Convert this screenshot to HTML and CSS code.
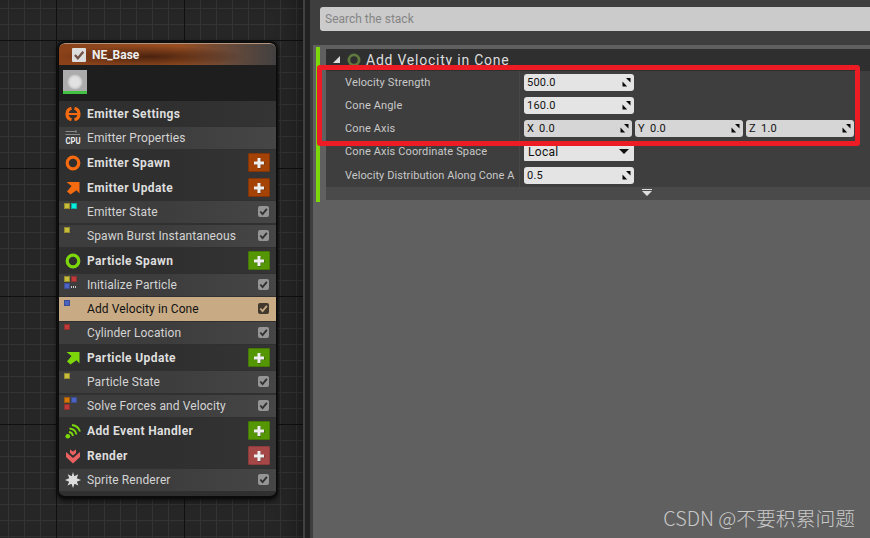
FILE: index.html
```
<!DOCTYPE html>
<html lang="en">
<head>
    <meta charset="UTF-8">
    <meta name="viewport" content="width=device-width, initial-scale=1.0">
    <title>NE_Base</title>
    <link rel="stylesheet" href="styles.css">
</head>
<body>
    <!-- shared icons -->
    <svg class="defs">
        <defs>
            <symbol id="check" viewBox="0 0 12 12"><path d="M2.5 6 L5 8.8 L9.7 3.2" fill="none" stroke="currentColor" stroke-width="2"/></symbol>
            <symbol id="plus" viewBox="0 0 12 12"><path d="M5 2h3v9.500H5zM2 5h9.500v3H2z" fill="#222" opacity=".6"/><path d="M4.500 1h3v3.500H11v3H7.500V11h-3V7.500H1v-3h3.500z" fill="#eee"/></symbol>
            <symbol id="ring" viewBox="0 0 16 16"><circle cx="8" cy="8" r="5.800" fill="none" stroke="currentColor" stroke-width="3.200"/></symbol>
            <symbol id="arrow" viewBox="0 0 16 16"><path d="M1.500 2H14.500V13.500L11.500 10.300L5.500 14.500L2 11.500L6.500 6z" fill="currentColor"/></symbol>
            <symbol id="spin" viewBox="0 0 9 9"><path d="M4 0H8.500V4.500zM0.500 3.500V8.500H5.200z" fill="#080808"/></symbol>
        </defs>
    </svg>

    <div class="editor">
        <div class="graph">
            <div class="node">
                <div class="node-title">
                    <span class="title-check"><svg><use href="#check"/></svg></span>
                    NE_Base
                </div>
                <div class="preview"><div class="thumb"></div></div>

                <div class="group orange">
                    <svg class="icon" viewBox="0 0 16 16"><path d="M6.500 2.200A6 6 0 0 0 6.500 13.800M9.500 2.200A6 6 0 0 1 9.500 13.800" fill="none" stroke="currentColor" stroke-width="3.200"/><path d="M3 8H13" stroke="currentColor" stroke-width="2.200"/></svg>
                    <span>Emitter Settings</span>
                </div>
                <div class="item">
                    <svg class="icon cpu" viewBox="0 0 16 16"><path d="M0.500 1.500H11M0.500 4.500H15M11 0V3" stroke="#888" stroke-width="1"/><text x="0.500" y="14" textLength="15" lengthAdjust="spacingAndGlyphs">CPU</text></svg>
                    <span>Emitter Properties</span>
                </div>

                <div class="group orange">
                    <svg class="icon"><use href="#ring"/></svg>
                    <span>Emitter Spawn</span>
                    <button class="add"><svg><use href="#plus"/></svg></button>
                </div>
                <div class="group orange">
                    <svg class="icon"><use href="#arrow"/></svg>
                    <span>Emitter Update</span>
                    <button class="add"><svg><use href="#plus"/></svg></button>
                </div>
                <div class="item">
                    <div class="dots"><i class="y"></i><i class="c"></i></div>
                    <span>Emitter State</span>
                    <b class="box"><svg><use href="#check"/></svg></b>
                </div>
                <div class="item">
                    <div class="dots"><i class="y"></i></div>
                    <span>Spawn Burst Instantaneous</span>
                    <b class="box"><svg><use href="#check"/></svg></b>
                </div>

                <div class="group green">
                    <svg class="icon"><use href="#ring"/></svg>
                    <span>Particle Spawn</span>
                    <button class="add"><svg><use href="#plus"/></svg></button>
                </div>
                <div class="item">
                    <div class="dots"><i class="y"></i><i class="r"></i><i class="b"></i><em></em></div>
                    <span>Initialize Particle</span>
                    <b class="box"><svg><use href="#check"/></svg></b>
                </div>
                <div class="item selected">
                    <div class="dots"><i class="b"></i></div>
                    <span>Add Velocity in Cone</span>
                    <b class="box"><svg><use href="#check"/></svg></b>
                </div>
                <div class="item">
                    <div class="dots"><i class="r"></i></div>
                    <span>Cylinder Location</span>
                    <b class="box"><svg><use href="#check"/></svg></b>
                </div>

                <div class="group green">
                    <svg class="icon"><use href="#arrow"/></svg>
                    <span>Particle Update</span>
                    <button class="add"><svg><use href="#plus"/></svg></button>
                </div>
                <div class="item">
                    <div class="dots"><i class="y"></i></div>
                    <span>Particle State</span>
                    <b class="box"><svg><use href="#check"/></svg></b>
                </div>
                <div class="item">
                    <div class="dots"><i class="o"></i><i class="b"></i><i class="r"></i></div>
                    <span>Solve Forces and Velocity</span>
                    <b class="box"><svg><use href="#check"/></svg></b>
                </div>

                <div class="group green">
                    <svg class="icon" viewBox="0 0 16 16"><circle cx="2.800" cy="13.300" r="2.300" fill="currentColor"/><path d="M4 9Q7.500 9.500 8 13M4.500 5.500Q10.500 6 11.500 11.500M7 2Q13.500 3 15 8.500" fill="none" stroke="currentColor" stroke-width="1.800"/></svg>
                    <span>Add Event Handler</span>
                    <button class="add"><svg><use href="#plus"/></svg></button>
                </div>
                <div class="group red">
                    <svg class="icon" viewBox="0 0 16 16"><path d="M1 4L8 10L15 4V9L8 15.500L1 9zM5 1.500L8 3.500L11 1.500V5L8 7.500L5 5z" fill="currentColor"/></svg>
                    <span>Render</span>
                    <button class="add"><svg><use href="#plus"/></svg></button>
                </div>
                <div class="item">
                    <svg class="icon" viewBox="0 0 16 16"><path d="M8 0L9.300 4.200L13.200 2.200L11.800 6.300L16 8L11.800 9.700L13.500 13.500L9.500 11.800L8 16L6.500 11.800L2.500 13.500L4.200 9.700L0 8L4.200 6.300L2.800 2.200L6.700 4.200z" fill="#ddd"/><circle cx="8" cy="8" r="4" fill="#ddd"/></svg>
                    <span>Sprite Renderer</span>
                    <b class="box"><svg><use href="#check"/></svg></b>
                </div>
            </div>
        </div>

        <div class="splitter"></div>

        <div class="details">
            <div class="search-bar"><input type="text" placeholder="Search the stack"></div>
            <div class="stack">
                <div class="module">
                    <div class="module-title">
                        <svg class="expander" viewBox="0 0 8 8"><path d="M8 0V8H0z" fill="#ddd"/></svg>
                        <svg class="ring"><use href="#ring"/></svg>
                        <span>Add Velocity in Cone</span>
                    </div>
                    <div class="row">
                        <label>Velocity Strength</label>
                        <div class="values"><div class="field">500.0<svg><use href="#spin"/></svg></div></div>
                    </div>
                    <div class="row">
                        <label>Cone Angle</label>
                        <div class="values"><div class="field">160.0<svg><use href="#spin"/></svg></div></div>
                    </div>
                    <div class="row">
                        <label>Cone Axis</label>
                        <div class="values vector">
                            <div class="field"><span>X</span>0.0<svg><use href="#spin"/></svg></div>
                            <div class="field"><span>Y</span>0.0<svg><use href="#spin"/></svg></div>
                            <div class="field"><span>Z</span>1.0<svg><use href="#spin"/></svg></div>
                        </div>
                    </div>
                    <div class="row">
                        <label>Cone Axis Coordinate Space</label>
                        <div class="values"><div class="select">Local</div></div>
                    </div>
                    <div class="row last">
                        <label>Velocity Distribution Along Cone A</label>
                        <div class="values"><div class="field">0.5<svg><use href="#spin"/></svg></div></div>
                    </div>
                    <div class="more"><svg viewBox="0 0 10 7"><path d="M0 0H10V1H0zM0 2H10L5 7z" fill="#ddd"/></svg></div>
                </div>
            </div>
        </div>
        <div class="highlight"></div>
        <div class="watermark">CSDN @不要积累问题</div>
    </div>
</body>
</html>
```
FILE: styles.css
```
* {
    box-sizing: border-box;
    margin: 0;
    padding: 0;
}

body {
    font-family: Roboto, "Noto Sans CJK SC", sans-serif;
    font-size: 12px;
    overflow: hidden;
}

svg {
    display: block;
}

.defs {
    display: none;
}

.editor {
    position: relative;
    display: flex;
    width: 870px;
    height: 538px;
    overflow: hidden;
}

/* graph */
.graph {
    width: 303px;
    padding: 42px 0 0 58px;
    background:
        linear-gradient(90deg, #101010 1px, transparent 1px) 56px 0 / 128px 128px,
        linear-gradient(#101010 1px, transparent 1px) 0 40px / 128px 128px,
        linear-gradient(90deg, #343434 1px, transparent 1px) 8px 0 / 16px 16px,
        linear-gradient(#343434 1px, transparent 1px) 0 8px / 16px 16px,
        #262626;
    box-shadow: inset -16px 0 22px -12px rgba(0, 0, 0, 0.4);
}

.node {
    width: 219px;
    height: 456px;
    border: 1px solid #0b0b0b;
    border-bottom-width: 2px;
    border-radius: 7px;
    background: #2f2f2f;
    box-shadow: 0 0 2px 1px #0c0c0c, 0 3px 6px rgba(0, 0, 0, 0.6);
    color: #d4d4d4;
    overflow: hidden;
}

.node-title {
    display: flex;
    align-items: center;
    gap: 6px;
    height: 22px;
    padding-left: 13px;
    border-top: 1px solid #b39580;
    border-radius: 6px 6px 0 0;
    background:
        radial-gradient(ellipse 95px 11px at 42% 60%, rgba(48, 20, 8, 0.75), transparent),
        linear-gradient(90deg, #8a4119, #9a4f22 55%, #65493a 80%, #414141);
    color: #eee;
    font-weight: bold;
}

.title-check {
    width: 14px;
    height: 14px;
    border-radius: 1px;
    background: #ddd;
    color: #705044;
}

.title-check svg {
    width: 14px;
    height: 14px;
}

.preview {
    height: 36px;
    padding: 5px 0 0 4px;
    background: #1d1e1d;
}

.thumb {
    width: 24px;
    height: 24px;
    border-bottom: 3px solid #43c143;
    background: radial-gradient(circle at 12px 12px, #e2e2e2 4px, #d5d5d5 6px, #acacac 8px);
}

.group,
.item {
    display: flex;
    align-items: center;
    height: 24px;
    padding: 0 7px 0 6px;
    white-space: nowrap;
}

.group {
    height: 25px;
    padding-right: 6px;
    background: linear-gradient(90deg, #2f2f2f 50%, #343434);
    font-weight: bold;
}

.group span {
    letter-spacing: 0.38px;
    color: #dedede;
}

.item {
    border: solid #303030;
    border-width: 1px 0;
    background: linear-gradient(90deg, #3d3d3d 50%, #464646);
}

.item span {
    letter-spacing: 0.1px;
}

.icon {
    flex: none;
    width: 16px;
    height: 16px;
    margin-right: 6px;
}

.orange { color: #f76b10; }
.green { color: #7cd80b; }
.red { color: #e96161; }

.cpu {
    overflow: visible;
}

.cpu text {
    fill: #eee;
    font-size: 9px;
    font-weight: bold;
}

.add {
    display: flex;
    align-items: center;
    justify-content: center;
    width: 22px;
    height: 19px;
    margin-left: auto;
    border: 1px solid #813509;
    border-radius: 1px;
    background: #a54307;
}

.add svg {
    width: 12px;
    height: 12px;
}

.green .add {
    border-color: #467807;
    background: #559605;
}

.red .add {
    border-color: #8c3c3c;
    background: #a54747;
}

.box {
    width: 11px;
    height: 11px;
    margin: 0 0 1px auto;
    border-radius: 2px;
    background: #959595;
    color: #303030;
}

.box svg {
    width: 11px;
    height: 11px;
}

.dots {
    display: flex;
    flex-wrap: wrap;
    align-content: flex-start;
    gap: 1px;
    width: 23px;
    height: 18px;
    margin-left: -1px;
    padding-right: 9px;
}

.dots i {
    width: 6px;
    height: 6px;
    border: 1px solid rgba(25, 25, 25, 0.3);
}

.dots em {
    width: 6px;
    height: 2px;
    margin-top: 3px;
    background: repeating-linear-gradient(90deg, #ccc 0 1px, transparent 1px 2px);
}

.y { background: #c8bd3a; }
.c { background: #08efe0; }
.r { background: #c13a3a; }
.b { background: #4c63c4; }
.o { background: #d47708; }

.item.selected {
    border-color: #c8ab85;
    background: #c8ab85;
    color: #111;
}

.selected .box {
    background: #42382c;
    color: #c8ab85;
}

.splitter {
    width: 7px;
    border-left: 2px solid #414141;
    background: #222;
}

/* details */
.details {
    display: flex;
    flex-direction: column;
    width: 560px;
    background: #3e3e3e;
}

.search-bar {
    height: 45px;
    padding: 7px 0 0 10px;
}

.search-bar input {
    display: block;
    width: 560px;
    height: 24px;
    padding: 0 5px;
    border: 0;
    border-radius: 3px;
    background: #cbcbcb;
    font: 12px Roboto, sans-serif;
}

.search-bar input::placeholder {
    color: #858585;
}

.stack {
    flex: 1;
    margin-left: 3px;
    padding: 2px 0 0 3px;
    background: #606060;
}

.module {
    height: 155px;
    padding: 2px 0 0 6px;
    border-left: 4px solid #7cd80b;
}

.module-title {
    display: flex;
    align-items: center;
    height: 22px;
    padding-left: 7px;
    background: #2f2f2f;
    color: #ddd;
    font-size: 14px;
    letter-spacing: 0.77px;
}

.expander {
    width: 7px;
    height: 7px;
    margin: 0 7px 2px 0;
}

.ring {
    width: 14px;
    height: 14px;
    margin-right: 5px;
    color: #5f783d;
}

.row {
    display: flex;
    height: 23px;
    background: #3e3e3e;
}

.row.last {
    height: 24px;
}

.row label {
    width: 194px;
    margin-right: 4px;
    padding-left: 19px;
    border-right: 1px solid #484848;
    color: #c8c8c8;
    font-size: 11px;
    line-height: 23px;
    letter-spacing: 0.14px;
    white-space: nowrap;
}

.row.last label {
    line-height: 25px;
    letter-spacing: 0.07px;
}

.values {
    display: flex;
    align-items: center;
    gap: 3px;
}

.field,
.select {
    display: flex;
    align-items: center;
    width: 110px;
    height: 17px;
    padding: 0 3px;
    border-radius: 3px;
    background: #e4e4e4;
    color: #111;
    font-size: 11px;
    letter-spacing: 0.2px;
}

.field svg {
    width: 9px;
    height: 9px;
    margin-left: auto;
}

.field span {
    width: 12px;
}

.vector .field {
    width: 108px;
    background: #d6d6d6;
}

.select {
    justify-content: space-between;
    height: 19px;
    padding: 0 5px 0 4px;
    border-radius: 1px;
    font-size: 12px;
    letter-spacing: 0.3px;
}

.select::after {
    content: "";
    border: 5px solid transparent;
    border-top: 5px solid #111;
    border-bottom: 0;
}

.more {
    display: flex;
    justify-content: center;
    height: 13px;
    padding: 2px 0 0 98px;
    background: #4a4a4a;
}

.more svg {
    width: 10px;
    height: 7px;
}

/* callout over the fields */
.highlight {
    position: absolute;
    left: 317px;
    top: 65px;
    width: 543px;
    height: 81px;
    border: 5px solid #ed1c24;
    border-radius: 3px;
}

.watermark {
    position: absolute;
    right: 15px;
    bottom: 6px;
    color: #c9c9c9;
    font-family: "Noto Sans CJK SC", sans-serif;
    font-size: 19.8px;
    font-weight: 300;
    line-height: 28px;
    white-space: nowrap;
}
```
